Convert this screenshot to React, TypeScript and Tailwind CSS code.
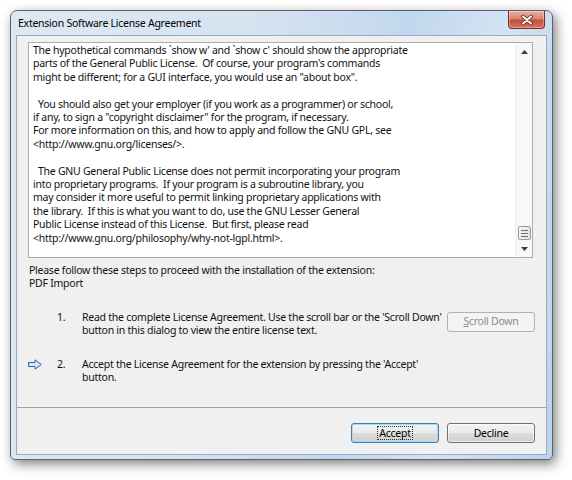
import React from 'react';

const licenseLines = [
  "The hypothetical commands `show w' and `show c' should show the appropriate",
  "parts of the General Public License.  Of course, your program's commands",
  'might be different; for a GUI interface, you would use an "about box".',
  ' ',
  '  You should also get your employer (if you work as a programmer) or school,',
  'if any, to sign a "copyright disclaimer" for the program, if necessary.',
  'For more information on this, and how to apply and follow the GNU GPL, see',
  '<http://www.gnu.org/licenses/>.',
  ' ',
  '  The GNU General Public License does not permit incorporating your program',
  'into proprietary programs.  If your program is a subroutine library, you',
  'may consider it more useful to permit linking proprietary applications with',
  'the library.  If this is what you want to do, use the GNU Lesser General',
  'Public License instead of this License.  But first, please read',
  '<http://www.gnu.org/philosophy/why-not-lgpl.html>.',
];

// red caption close button
const CloseButton = () => (
  <div className="flex h-[18px] w-[37px] items-center justify-center rounded-b-[4px] border border-t-0 border-[#7a2d24] bg-[linear-gradient(to_bottom,#eab0a3,#d98270_45%,#c4503d_55%,#d6735f)] shadow-[inset_0_0_0_1px_rgba(255,255,255,0.35)]">
    <svg width="12" height="10" viewBox="0 0 12 10">
      <path d="M2 1.5 L10 8.5 M10 1.5 L2 8.5" stroke="#5a1d16" strokeWidth="3.6" strokeLinecap="round" />
      <path d="M2 1.5 L10 8.5 M10 1.5 L2 8.5" stroke="#ffffff" strokeWidth="2" strokeLinecap="round" />
    </svg>
  </div>
);

const Scrollbar = () => (
  <div className="flex w-[17px] flex-col items-center border-l border-[#ececec] bg-[#f8f8f8]">
    <div className="flex h-[17px] w-full items-center justify-center">
      <svg width="7" height="4" viewBox="0 0 7 4">
        <path d="M0 4 L3.5 0 L7 4 Z" fill="#3a3a3a" />
      </svg>
    </div>
    <div className="flex-1" />
    <div className="flex h-[14px] w-[13px] flex-col items-center justify-center gap-[2px] rounded-[2px] border border-[#9a9a9a] bg-[linear-gradient(to_right,#f4f4f4,#e2e2e2)]">
      <div className="h-px w-[7px] bg-[#6f6f6f]" />
      <div className="h-px w-[7px] bg-[#6f6f6f]" />
      <div className="h-px w-[7px] bg-[#6f6f6f]" />
    </div>
    <div className="flex h-[17px] w-full items-center justify-center">
      <svg width="7" height="4" viewBox="0 0 7 4">
        <path d="M0 0 L7 0 L3.5 4 Z" fill="#3a3a3a" />
      </svg>
    </div>
  </div>
);

const StepArrow = () => (
  <svg width="14" height="11" viewBox="0 0 14 11">
    <path d="M0.5 3.5 H7 V0.8 L13.3 5.5 L7 10.2 V7.5 H0.5 Z" fill="#d6e6f7" stroke="#2e65a3" strokeWidth="1" strokeLinejoin="round" />
  </svg>
);

export default function App() {
  return (
    <div className="h-[480px] w-[572px] bg-white pl-[10px] pt-[10px] font-['Noto_Sans','Open_Sans',sans-serif] text-[10.5px] leading-[13.4px] tracking-[-0.25px] text-[#111]">
      <div className="w-[543px] rounded-t-[7px] rounded-b-[5px] border border-[#59626e] bg-[linear-gradient(100deg,#dde8f3_0%,#d5e3f1_40%,#c2d7ed_65%,#d3e3f3_80%,#bdd3eb_100%)] px-[6px] pb-[5px] shadow-[3px_4px_12px_rgba(0,0,0,0.5)]">
        {/* caption */}
        <div className="flex h-[25px] items-start">
          <div className="flex h-full items-center pl-[1px] text-black">Extension Software License Agreement</div>
          <div className="ml-auto mr-[1px]">
            <CloseButton />
          </div>
        </div>

        {/* client area */}
        <div className="flex flex-col bg-[#f0f0f0] shadow-[0_0_0_1px_#97abc4] pb-[11px]">
          <div className="ml-[11px] mt-[6px] flex h-[216px] w-[505px] border border-[#a9acb1] bg-white">
            <div className="flex-1 overflow-hidden whitespace-pre pl-[4px] pt-[1px]">
              {licenseLines.map((line, i) => (
                <div key={i}>{line}</div>
              ))}
            </div>
            <Scrollbar />
          </div>

          <div className="ml-[12px] mt-[6px]">
            <div>Please follow these steps to proceed with the installation of the extension:</div>
            <div>PDF Import</div>
          </div>

          <div className="mt-[20px] flex items-start">
            <div className="w-[40px]" />
            <div className="w-[25px]">1.</div>
            <div className="w-[365px] whitespace-nowrap">
              Read the complete License Agreement. Use the scroll bar or the 'Scroll Down'
              <br />
              button in this dialog to view the entire license text.
            </div>
            <button className="mt-[1px] flex h-[20px] w-[88px] items-center justify-center rounded-[3px] border border-[#adb2b5] bg-[#f4f4f4] text-[#8d8d8d]">
              <span><span className="underline">S</span>croll Down</span>
            </button>
          </div>

          <div className="mt-[20px] flex items-start">
            <div className="flex w-[40px] pl-[11px] pt-[1px]">
              <StepArrow />
            </div>
            <div className="w-[25px]">2.</div>
            <div className="whitespace-nowrap">
              Accept the License Agreement for the extension by pressing the 'Accept'
              <br />
              button.
            </div>
          </div>

          <div className="mt-[23px] h-px bg-[#a0a0a0]" />

          <div className="mt-[15px] flex justify-end gap-[8px] pr-[11px]">
            <button className="flex h-[20px] w-[88px] items-center justify-center rounded-[3px] border border-[#3c7fb1] bg-[linear-gradient(to_bottom,#f2f2f2,#ebebeb_50%,#dddddd_51%,#cfcfcf)] shadow-[inset_0_0_0_1px_#a8daf3] text-black">
              <span className="border border-dotted border-[#333] px-[1px] leading-[12px]">Accept</span>
            </button>
            <button className="flex h-[20px] w-[88px] items-center justify-center rounded-[3px] border border-[#707070] bg-[linear-gradient(to_bottom,#f2f2f2,#ebebeb_50%,#dddddd_51%,#cfcfcf)] shadow-[inset_0_0_0_1px_rgba(255,255,255,0.6)] text-black">
              Decline
            </button>
          </div>
        </div>
      </div>
    </div>
  );
}
